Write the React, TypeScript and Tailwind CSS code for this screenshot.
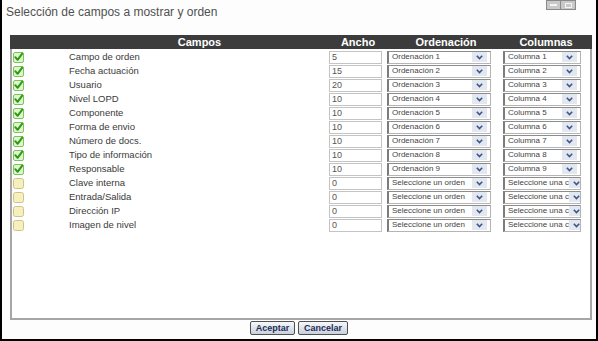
import React from "react";

type Row = { label: string; checked: boolean; ancho: string; ord: string; col: string };

const rows: Row[] = [
  { label: "Campo de orden", checked: true, ancho: "5", ord: "Ordenación 1", col: "Columna 1" },
  { label: "Fecha actuación", checked: true, ancho: "15", ord: "Ordenación 2", col: "Columna 2" },
  { label: "Usuario", checked: true, ancho: "20", ord: "Ordenación 3", col: "Columna 3" },
  { label: "Nivel LOPD", checked: true, ancho: "10", ord: "Ordenación 4", col: "Columna 4" },
  { label: "Componente", checked: true, ancho: "10", ord: "Ordenación 5", col: "Columna 5" },
  { label: "Forma de envio", checked: true, ancho: "10", ord: "Ordenación 6", col: "Columna 6" },
  { label: "Número de docs.", checked: true, ancho: "10", ord: "Ordenación 7", col: "Columna 7" },
  { label: "Tipo de información", checked: true, ancho: "10", ord: "Ordenación 8", col: "Columna 8" },
  { label: "Responsable", checked: true, ancho: "10", ord: "Ordenación 9", col: "Columna 9" },
  { label: "Clave interna", checked: false, ancho: "0", ord: "Seleccione un orden", col: "Seleccione una c" },
  { label: "Entrada/Salida", checked: false, ancho: "0", ord: "Seleccione un orden", col: "Seleccione una c" },
  { label: "Dirección IP", checked: false, ancho: "0", ord: "Seleccione un orden", col: "Seleccione una c" },
  { label: "Imagen de nivel", checked: false, ancho: "0", ord: "Seleccione un orden", col: "Seleccione una c" },
];

function Check({ checked }: { checked: boolean }) {
  return checked ? (
    <svg width="11" height="11" viewBox="0 0 11 11" className="shrink-0">
      <rect x="0.5" y="0.5" width="10" height="10" rx="1.5" fill="#dff5cc" stroke="#7cc35a" />
      <path d="M2.3 5.2 L4.6 7.8 L9.2 1.6" fill="none" stroke="#2c9a16" strokeWidth="2" strokeLinecap="round" strokeLinejoin="round" />
    </svg>
  ) : (
    <svg width="11" height="11" viewBox="0 0 11 11" className="shrink-0">
      <rect x="0.5" y="0.5" width="10" height="10" rx="2" fill="#f7f0bd" stroke="#cdc28c" />
    </svg>
  );
}

function Arrow() {
  return (
    <div className="flex h-[10px] w-[15px] shrink-0 items-center justify-center bg-[#e3e7ef]">
      <svg width="7" height="5" viewBox="0 0 7 5">
        <path d="M0.8 0.8 L3.5 3.6 L6.2 0.8" fill="none" stroke="#3d5687" strokeWidth="1.6" />
      </svg>
    </div>
  );
}

function Select({ text, w }: { text: string; w: string }) {
  return (
    <div
      className={`flex h-[13px] ${w} items-center overflow-hidden border border-[#b4b4b4] border-l-2 border-l-[#7c7c7c] border-t-[#8c8c8c] bg-white pl-[3px] pr-[3px]`}
    >
      <span className="flex-1 whitespace-nowrap text-[8px] leading-none text-[#444]">{text}</span>
      <Arrow />
    </div>
  );
}

export default function App() {
  return (
    <div className="flex h-[341px] w-[598px] flex-col border-b-2 border-l-2 border-r-2 border-black bg-[#fdfdfd] font-['Liberation_Sans',Arial,sans-serif]">
      <div className="flex h-[33px] items-start justify-between">
        <div className="pl-[4px] pt-[4px] text-[12px] leading-[16px] text-[#505050]">
          Selección de campos a mostrar y orden
        </div>
        <div className="mr-[20px] flex">
          <div className="flex h-[10px] w-[15px] items-center justify-center border border-[#8a8a8a] bg-[#c9c9c9]">
            <div className="h-[1.5px] w-[7px] bg-[#f4f4f4]" />
          </div>
          <div className="flex h-[10px] w-[15px] items-center justify-center border border-l-0 border-[#8a8a8a] bg-[#c9c9c9]">
            <div className="h-[5px] w-[7px] border border-[#f4f4f4]" />
          </div>
        </div>
      </div>

      <div className="ml-[8px] mt-[2px] flex h-[285px] w-[582px] flex-col">
        <div className="flex h-[14px] shrink-0 items-center bg-[#3c3c3c] text-[11px] font-bold leading-none text-white">
          <div className="w-[320px] pl-[59px] text-center">Campos</div>
          <div className="w-[56px] text-center">Ancho</div>
          <div className="w-[120px] text-center">Ordenación</div>
          <div className="w-[80px] text-center">Columnas</div>
        </div>
        <div className="flex flex-1 flex-col border-b-2 border-l-2 border-r-2 border-[#a6a6a6] bg-white pt-[1px]">
          {rows.map((r) => (
            <div key={r.label} className="flex h-[14px] items-center">
              <div className="w-[12px] pl-[1px]">
                <Check checked={r.checked} />
              </div>
              <div className="w-[45px]" />
              <div className="w-[260px] text-[9.5px] leading-none text-[#3a3a3a]">{r.label}</div>
              <div className="flex h-[13px] w-[53px] items-center border border-[#c4c4c4] bg-white pl-[2px] text-[9px] leading-none text-[#555]">
                {r.ancho}
              </div>
              <div className="w-[5px]" />
              <Select text={r.ord} w="w-[104px]" />
              <div className="w-[12px]" />
              <Select text={r.col} w="w-[78px]" />
            </div>
          ))}
        </div>
      </div>

      <div className="flex flex-1 items-start justify-center gap-[3px] pt-[1px]">
        <button className="h-[14px] w-[45px] rounded-[2px] border border-[#4f4f4f] bg-gradient-to-b from-[#f7f8fb] to-[#c9d0dc] text-[9px] font-bold leading-none text-[#1c2d55]">
          Aceptar
        </button>
        <button className="h-[14px] w-[50px] rounded-[2px] border border-[#4f4f4f] bg-gradient-to-b from-[#f7f8fb] to-[#c9d0dc] text-[9px] font-bold leading-none text-[#1c2d55]">
          Cancelar
        </button>
      </div>
    </div>
  );
}
